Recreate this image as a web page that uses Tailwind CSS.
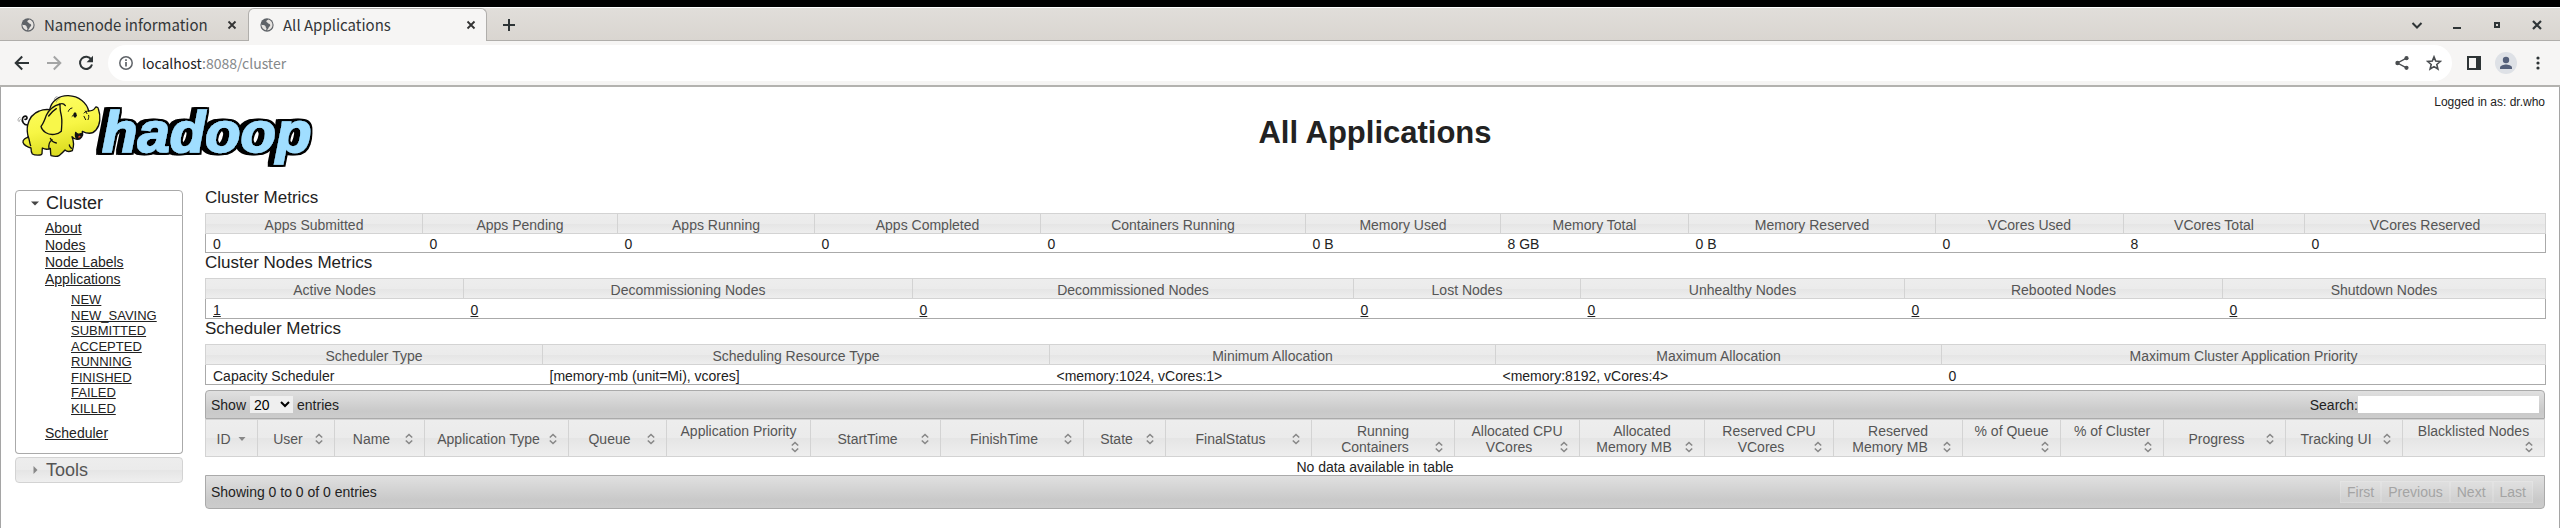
<!DOCTYPE html>
<html lang="en">
<head>
<meta charset="utf-8">
<title>All Applications</title>
<script src="https://cdn.jsdelivr.net/npm/@tailwindcss/browser@4"></script>
</head>
<body class="bg-white text-[#222222] text-[14px] leading-[16px] font-['Liberation_Sans',Arial,sans-serif]">
<svg class="hidden" aria-hidden="true">
  <symbol id="globe" viewBox="0 0 16 16"><circle cx="8" cy="8" r="7.6" fill="#5f6368"/><path d="M9.6 1.6c-1 .6-2.2 1.2-2.4 2.2-.2 1 1.400 1 1.700 2 .3 1.100 2.600.6 2.800 2.100.2 1.400-1.500 1.900-1.900 3.200-.3 1.100-1.200 2.200-2.200 2.900 3.900 0 6.700-2.700 6.700-6.100 0-3.200-2-5.600-4.700-6.300zM1.500 7.500c1.100.8 3.500.6 4.400 1.400.9.8.4 1.800 1.200 2.500.6.6.2 1.800-.3 2.500C3.800 13.300 1.600 11 1.500 7.500z" fill="#e6e3e0"/></symbol>
  <symbol id="close" viewBox="0 0 10 10"><path d="M1.500 1.500l7 7M8.500 1.500l-7 7" stroke="#333" stroke-width="1.800" fill="none"/></symbol>
  <symbol id="sort" viewBox="0 0 16 16"><path d="M4.800 6.500L8 3.500l3.200 3M4.800 9.500L8 12.500l3.200-3" stroke="#888" stroke-width="1.600" fill="none"/></symbol>
</svg>

<!-- Browser frame -->
<header class="font-['Noto_Sans_CJK_SC',sans-serif] text-[#333638]">
  <div class="h-[7px] bg-black"></div>
  <div class="flex h-[34px] items-stretch bg-linear-to-b from-[#e1deda] to-[#d9d5d0] border-t border-white shadow-[inset_0_-1px_0_#b0aeab]">
    <div class="flex w-[248px] items-center pl-[21px] pr-[11px] text-[15px]">
      <svg class="size-[14px] mr-[9px]"><use href="#globe"/></svg>
      <span class="grow whitespace-nowrap">Namenode information</span>
      <button aria-label="Close tab"><svg class="size-[10px]"><use href="#close"/></svg></button>
    </div>
    <div class="flex w-[239px] items-center rounded-t-[6px] border border-b-0 border-[#b0aeab] bg-[#f6f5f4] pl-[11px] pr-[10px] text-[15px]">
      <svg class="size-[14px] mr-[9px]"><use href="#globe"/></svg>
      <span class="grow whitespace-nowrap">All Applications</span>
      <button aria-label="Close tab"><svg class="size-[10px]"><use href="#close"/></svg></button>
    </div>
    <button class="px-4" aria-label="New tab"><svg class="size-[12px]" viewBox="0 0 12 12"><path d="M6 0v12M0 6h12" stroke="#2e3436" stroke-width="2"/></svg></button>
    <div class="ml-auto flex items-center gap-[28px] pr-[17px]">
      <button aria-label="Search tabs"><svg class="size-[12px]" viewBox="0 0 12 12"><path d="M1.500 4L6 8.500 10.500 4" stroke="#2e3436" stroke-width="2" fill="none"/></svg></button>
      <button aria-label="Minimize"><svg class="size-[12px]" viewBox="0 0 12 12"><path d="M2 9h8" stroke="#2e3436" stroke-width="2"/></svg></button>
      <button aria-label="Maximize"><svg class="size-[12px]" viewBox="0 0 12 12"><path d="M4 4h4v4H4z" stroke="#2e3436" stroke-width="2" fill="none"/></svg></button>
      <button aria-label="Close"><svg class="size-[12px]" viewBox="0 0 12 12"><path d="M2 2l8 8M10 2l-8 8" stroke="#2e3436" stroke-width="2.200"/></svg></button>
    </div>
  </div>
  <div class="flex h-[46px] items-center border-b-2 border-[#b3b2af] bg-[#f6f5f4] pl-[14px] pr-[14px]">
    <button class="mr-4" aria-label="Back"><svg class="size-[16px]" viewBox="0 0 16 16"><path d="M15 8H2M8.200 1.500L1.700 8l6.500 6.500" stroke="#2e3436" stroke-width="2" fill="none"/></svg></button>
    <button class="mr-4" aria-label="Forward"><svg class="size-[16px]" viewBox="0 0 16 16"><path d="M1 8h13M7.800 1.500L14.300 8l-6.500 6.500" stroke="#a4a5a5" stroke-width="2" fill="none"/></svg></button>
    <button class="mr-[14px]" aria-label="Reload"><svg class="size-[16px]" viewBox="0 0 16 16"><path d="M13.300 4.600A6.100 6.100 0 1 0 14 9.500" stroke="#2e3436" stroke-width="2" fill="none"/><path d="M15 .8v6.400H8.600z" fill="#2e3436"/></svg></button>
    <div class="flex h-[36px] grow items-center rounded-full bg-white pl-[11px] pr-[10px] text-[14px]">
      <svg class="mr-[9px] size-[14px]" viewBox="0 0 14 14"><circle cx="7" cy="7" r="6.200" fill="none" stroke="#5f6368" stroke-width="1.500"/><path d="M7 6v4.500M7 3.300v1.700" stroke="#5f6368" stroke-width="1.700"/></svg>
      <span class="grow"><span class="text-[#222]">localhost</span><span class="text-[#85888a]">:8088/cluster</span></span>
      <button class="mr-4" aria-label="Share"><svg class="size-[16px]" viewBox="0 0 16 16"><path d="M12.500 3.200L3.500 8l9 4.800" stroke="#4a4d50" stroke-width="1.400" fill="none"/><circle cx="12.500" cy="3.200" r="2.100" fill="#4a4d50"/><circle cx="3.500" cy="8" r="2.200" fill="#4a4d50"/><circle cx="12.500" cy="12.800" r="2.100" fill="#4a4d50"/></svg></button>
      <button aria-label="Bookmark"><svg class="size-[16px]" viewBox="0 0 16 16"><path d="M8 1.900l1.700 4.200 4.600.4-3.500 3 1.100 4.500L8 11.600 4.100 14l1.100-4.500-3.500-3 4.600-.4z" stroke="#4a4d50" stroke-width="1.600" fill="none"/></svg></button>
    </div>
    <button class="ml-[15px] mr-[14px]" aria-label="Side panel"><svg class="size-[14px]" viewBox="0 0 14 14"><path d="M1 1h12v12H1z" stroke="#2e3436" stroke-width="2" fill="none"/><path d="M9 0h5v14H9z" fill="#2e3436"/></svg></button>
    <button class="mr-[13px]" aria-label="Profile"><svg class="size-[22px]" viewBox="0 0 22 22"><circle cx="11" cy="11" r="11" fill="#dee1e6"/><circle cx="11" cy="8" r="3.200" fill="#55607a"/><path d="M5 17v-1.500c0-2 4-3 6-3s6 1 6 3V17z" fill="#55607a"/></svg></button>
    <button aria-label="Menu"><svg class="h-[16px] w-[16px]" viewBox="0 0 16 16" fill="#2e3436"><circle cx="8" cy="3" r="1.600"/><circle cx="8" cy="8" r="1.600"/><circle cx="8" cy="13" r="1.600"/></svg></button>
  </div>
</header>

<main class="grid min-h-[441px] grid-cols-[168px_minmax(0,1fr)] grid-rows-[auto_1fr] gap-x-[22px] border-x border-[#a5a5a5] pl-[14px] pr-[14px]">
  <a href="#" aria-label="Hadoop">
    <svg class="h-[83px] w-[305px] max-w-none" viewBox="15 3 915 249">
      <defs>
        <linearGradient id="skin" x1="0" y1="0" x2="0.300" y2="1"><stop offset="0" stop-color="#ffff6a"/><stop offset=".6" stop-color="#f7f645"/><stop offset="1" stop-color="#dcdc20"/></linearGradient>
        <filter id="outline" x="-10%" y="-10%" width="120%" height="120%">
          <feMorphology in="SourceAlpha" operator="dilate" radius="5" result="edge"/>
          <feOffset in="edge" dx="-6" result="mid"/>
          <feOffset in="edge" dx="-12" dy="1" result="far"/>
          <feMerge><feMergeNode in="edge"/><feMergeNode in="mid"/><feMergeNode in="far"/><feMergeNode in="SourceGraphic"/></feMerge>
        </filter>
      </defs>
      <text filter="url(#outline)" class="font-bold italic" x="276" y="199" font-family="Liberation Sans" font-size="174" fill="#a0deff" stroke="#a0deff" stroke-width="5">hadoop</text>
      <g stroke="#111" stroke-width="4" stroke-linecap="round" stroke-linejoin="round" fill="none">
        <path d="M53 117C42 118 34 106 38 96c3-7 12-8 13-1 0 4-3 6-6 5" stroke-width="5"/>
        <path d="M53 117c5-20 18-36 35-42 9-4 20-5 31-4C124 44 148 28 175 29c32 1 56 22 61 46 9 0 16-4 19-9 3-5 9-3 10 2 8 23 6 49-7 64-10 12-25 12-41 4 4 13-5 25-16 24-7 0-12-4-15-8 5 12 6 28 1 42-7 3-17 3-22-2-6 7-12 12-18 17-7 4-17 2-24 0-2-8-1-15-2-22-8 4-17 3-24-1l-1 17c-2 6-22 5-29 1-3-5-4-11-4-18-10-2-22-9-24-17-1-8 8-14 16-15-3-12-5-24-2-37z" fill="url(#skin)"/>
        <path d="M150 54c-19 5-34 19-41 34-4 10-8 24-16 33 3 14 20 27 40 24 13-1 17-5 21-9 1-18 4-34-1-52-3-10-3-20-3-30z" fill="#f8f74a"/>
        <path d="M150 54c7-3 12-1 16 5M116 90c7-10 15-17 23-22M54 151c5 8 4 20 8 28M117 189c-2-11 1-22 9-28M121 157c4 9 10 13 18 14M184 187c-4-4-6-6-6-10"/>
        <path d="M197 139c3 5 10 8 18 3 0 10-6 17-12 17-6-1-8-10-6-20z" fill="#111"/>
        <path d="M204 154c1-5 7-6 8-3-2 4-5 6-8 3z" fill="#e04a20" stroke="none"/>
        <path d="M175 76c2-6 6-9 11-10M186 91c5-6 10-7 14-3M226 75l5 8M222 91l5 10M236 88c1 5 0 9-2 13M236 75c-7 0-10 2-14 6" stroke-width="3"/>
        <ellipse cx="195" cy="87" rx="5" ry="8" fill="#111" stroke="none"/>
        <path d="M133 41c0-5 3-8 8-9M139 48c1-5 4-8 9-9M24 103c0-5 2-8 6-9M27 107c0-4 2-6 4-7" stroke="#777" stroke-width="2"/>
      </g>
    </svg>
  </a>
  <div class="pb-[34px] pt-[7px]">
    <p class="text-right text-[12px]">Logged in as: dr.who</p>
    <h1 class="mt-[3px] text-center text-[31px] font-bold leading-[40px]">All Applications</h1>
  </div>

  <nav class="flex flex-col gap-[3px] pt-[3px]">
    <div>
      <button class="flex h-[26px] w-full items-center gap-[5px] rounded-t-[4px] border border-[#aaa] bg-white pl-[13px] text-[18px]"><svg class="size-[12px]" viewBox="0 0 12 12"><path d="M2 4.500h8L6 8.500z" fill="#454545"/></svg>Cluster</button>
      <div class="rounded-b-[4px] border border-t-0 border-[#aaa] pb-[11px] pl-[29px] pt-[4px]">
        <ul class="leading-[17px] underline">
          <li><a href="#">About</a></li>
          <li><a href="#">Nodes</a></li>
          <li><a href="#">Node Labels</a></li>
          <li><a href="#">Applications</a></li>
        </ul>
        <ul class="mb-[9px] mt-[4px] flex h-31 flex-col justify-between pl-[26px] text-[13px] leading-[15px] underline">
          <li><a href="#">NEW</a></li>
          <li><a href="#">NEW_SAVING</a></li>
          <li><a href="#">SUBMITTED</a></li>
          <li><a href="#">ACCEPTED</a></li>
          <li><a href="#">RUNNING</a></li>
          <li><a href="#">FINISHED</a></li>
          <li><a href="#">FAILED</a></li>
          <li><a href="#">KILLED</a></li>
        </ul>
        <a class="block leading-[17px] underline" href="#">Scheduler</a>
      </div>
    </div>
    <button class="flex h-[26px] items-center gap-[5px] rounded-[4px] border border-[#d3d3d3] bg-[linear-gradient(#ededed,#ebebeb_50%,#e5e5e5_50%,#efefef)] pl-[13px] text-[18px] text-[#555]"><svg class="size-[12px]" viewBox="0 0 12 12"><path d="M4.500 2v8l4-4z" fill="#888"/></svg>Tools</button>
  </nav>

  <div>
    <h2 class="-mt-[2px] pb-[3px] text-[17px] leading-[25px]">Cluster Metrics</h2>
    <table class="w-full table-fixed border-collapse border border-[#aaa]">
      <colgroup><col class="w-[217px]"><col class="w-[195px]"><col class="w-[197px]"><col class="w-[226px]"><col class="w-[265px]"><col class="w-[195px]"><col class="w-[188px]"><col class="w-[247px]"><col class="w-[188px]"><col class="w-[181px]"><col class="w-[241px]"></colgroup>
      <thead class="bg-[linear-gradient(#ededed,#ebebeb_50%,#e5e5e5_50%,#efefef)] text-[#555] [&_th]:border [&_th]:border-[#d3d3d3] [&_th]:pt-[3px] [&_th]:font-normal">
        <tr><th>Apps Submitted</th><th>Apps Pending</th><th>Apps Running</th><th>Apps Completed</th><th>Containers Running</th><th>Memory Used</th><th>Memory Total</th><th>Memory Reserved</th><th>VCores Used</th><th>VCores Total</th><th>VCores Reserved</th></tr>
      </thead>
      <tbody class="[&_td]:pl-[7px] [&_td]:pt-[2px]">
        <tr><td>0</td><td>0</td><td>0</td><td>0</td><td>0</td><td>0 B</td><td>8 GB</td><td>0 B</td><td>0</td><td>8</td><td>0</td></tr>
      </tbody>
    </table>
    <h2 class="-mt-[3px] pb-[3px] text-[17px] leading-[25px]">Cluster Nodes Metrics</h2>
    <table class="w-full table-fixed border-collapse border border-[#aaa]">
      <colgroup><col class="w-[258px]"><col class="w-[449px]"><col class="w-[441px]"><col class="w-[227px]"><col class="w-[324px]"><col class="w-[318px]"><col class="w-[323px]"></colgroup>
      <thead class="bg-[linear-gradient(#ededed,#ebebeb_50%,#e5e5e5_50%,#efefef)] text-[#555] [&_th]:border [&_th]:border-[#d3d3d3] [&_th]:pt-[3px] [&_th]:font-normal">
        <tr><th>Active Nodes</th><th>Decommissioning Nodes</th><th>Decommissioned Nodes</th><th>Lost Nodes</th><th>Unhealthy Nodes</th><th>Rebooted Nodes</th><th>Shutdown Nodes</th></tr>
      </thead>
      <tbody class="underline [&_td]:pl-[7px] [&_td]:pt-[3px]">
        <tr><td><a href="#">1</a></td><td><a href="#">0</a></td><td><a href="#">0</a></td><td><a href="#">0</a></td><td><a href="#">0</a></td><td><a href="#">0</a></td><td><a href="#">0</a></td></tr>
      </tbody>
    </table>
    <h2 class="-mt-[3px] pb-[3px] text-[17px] leading-[25px]">Scheduler Metrics</h2>
    <table class="w-full table-fixed border-collapse border border-[#aaa]">
      <colgroup><col class="w-[337px]"><col class="w-[507px]"><col class="w-[446px]"><col class="w-[446px]"><col class="w-[604px]"></colgroup>
      <thead class="bg-[linear-gradient(#ededed,#ebebeb_50%,#e5e5e5_50%,#efefef)] text-[#555] [&_th]:border [&_th]:border-[#d3d3d3] [&_th]:pt-[3px] [&_th]:font-normal">
        <tr><th>Scheduler Type</th><th>Scheduling Resource Type</th><th>Minimum Allocation</th><th>Maximum Allocation</th><th>Maximum Cluster Application Priority</th></tr>
      </thead>
      <tbody class="[&_td]:pl-[7px] [&_td]:pt-[3px]">
        <tr><td>Capacity Scheduler</td><td>[memory-mb (unit=Mi), vcores]</td><td>&lt;memory:1024, vCores:1&gt;</td><td>&lt;memory:8192, vCores:4&gt;</td><td>0</td></tr>
      </tbody>
    </table>

    <div class="mt-[5px] flex items-center justify-between rounded-t-[4px] border border-[#aaa] bg-linear-to-b from-[#e0e0e0] via-[#c9c9c9] via-75% to-[#cccccc] px-[5px] py-[5px]">
      <label class="flex items-center gap-[4px]">Show <select class="h-[17px] w-[43px] bg-[#efefef] text-[14px] leading-[16px] text-black"><option>20</option></select> entries</label>
      <label class="flex items-center">Search:<input type="text" class="h-[17px] w-[181px] bg-white"></label>
    </div>
    <table class="w-full table-fixed border-collapse">
      <colgroup><col class="w-[52px]"><col class="w-[77px]"><col class="w-[90px]"><col class="w-[144px]"><col class="w-[98px]"><col class="w-[144px]"><col class="w-[130px]"><col class="w-[143px]"><col class="w-[82px]"><col class="w-[146px]"><col class="w-[143px]"><col class="w-[125px]"><col class="w-[125px]"><col class="w-[129px]"><col class="w-[129px]"><col class="w-[98px]"><col class="w-[103px]"><col class="w-[122px]"><col class="w-[117px]"><col class="w-[142px]"></colgroup>
      <thead class="bg-[linear-gradient(#ededed,#ebebeb_50%,#e5e5e5_50%,#efefef)] text-[#555] [&_svg]:float-right [&_svg]:size-[16px] [&_th]:border [&_th]:border-[#d3d3d3] [&_th]:px-[7px] [&_th]:pb-px [&_th]:pt-[3px] [&_th]:font-normal">
        <tr>
          <th>ID<svg viewBox="0 0 16 16"><path d="M4.500 6h7L8 10z" fill="#888"/></svg></th>
          <th>User<svg><use href="#sort"/></svg></th>
          <th>Name<svg><use href="#sort"/></svg></th>
          <th>Application Type<svg><use href="#sort"/></svg></th>
          <th>Queue<svg><use href="#sort"/></svg></th>
          <th>Application Priority<svg><use href="#sort"/></svg></th>
          <th>StartTime<svg><use href="#sort"/></svg></th>
          <th>FinishTime<svg><use href="#sort"/></svg></th>
          <th>State<svg><use href="#sort"/></svg></th>
          <th>FinalStatus<svg><use href="#sort"/></svg></th>
          <th>Running<br>Containers<svg><use href="#sort"/></svg></th>
          <th>Allocated CPU VCores<svg><use href="#sort"/></svg></th>
          <th>Allocated Memory MB<svg><use href="#sort"/></svg></th>
          <th>Reserved CPU VCores<svg><use href="#sort"/></svg></th>
          <th>Reserved Memory MB<svg><use href="#sort"/></svg></th>
          <th>% of Queue<svg><use href="#sort"/></svg></th>
          <th>% of Cluster<svg><use href="#sort"/></svg></th>
          <th>Progress<svg><use href="#sort"/></svg></th>
          <th>Tracking UI<svg><use href="#sort"/></svg></th>
          <th>Blacklisted Nodes<br><svg><use href="#sort"/></svg></th>
        </tr>
      </thead>
      <tbody><tr><td colspan="20" class="pt-[2px] text-center">No data available in table</td></tr></tbody>
    </table>
    <div class="flex items-center justify-between rounded-b-[4px] border border-[#aaa] bg-linear-to-b from-[#e0e0e0] via-[#c9c9c9] via-75% to-[#cccccc] py-[5px] pl-[5px] pr-[11px]">
      <span>Showing 0 to 0 of 0 entries</span>
      <div class="flex text-[#a4a4a4] [&_button]:h-[22px] [&_button]:border [&_button]:border-white/15 [&_button]:bg-white/15 [&_button]:px-[6px]">
        <button disabled>First</button><button disabled>Previous</button><button disabled>Next</button><button disabled>Last</button>
      </div>
    </div>
  </div>
</main>
</body>
</html>
